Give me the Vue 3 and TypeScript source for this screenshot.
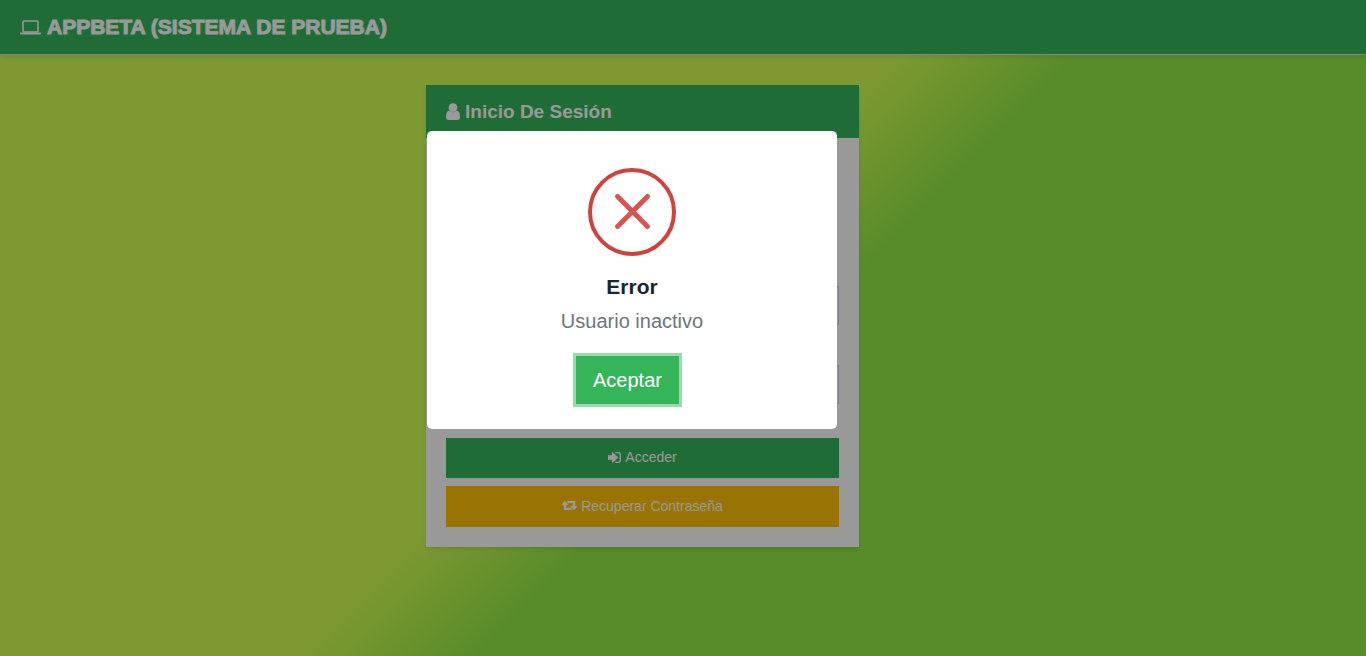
<script setup lang="ts">
import { ref } from 'vue'

const user = ref('')
const password = ref('')
const open = ref(true)
</script>

<template>
  <div class="page">
    <header class="topbar">
      <svg class="laptop" viewBox="0 0 21 15" aria-hidden="true">
        <rect x="3" y="1" width="15" height="11" rx="1" fill="none" stroke="currentColor" stroke-width="1.5" />
        <path d="M0 12.6H21V13.2Q21 14.6 19.5 14.6H1.5Q0 14.6 0 13.2Z" fill="currentColor" />
      </svg>
      <h1>APPBETA (SISTEMA DE PRUEBA)</h1>
    </header>

    <main class="content">
      <form class="card" @submit.prevent="open = true">
        <div class="card-head">
          <svg class="person" viewBox="0 0 14 17" fill="currentColor" aria-hidden="true">
            <circle cx="7" cy="4.6" r="4.4" />
            <path d="M3.2 7.6Q7 11 10.8 7.6Q14 8.2 14 14Q14 17 11.4 17H2.6Q0 17 0 14Q0 8.2 3.2 7.6Z" />
          </svg>
          <h2>Inicio De Sesión</h2>
        </div>
        <div class="card-body">
          <input v-model="user" class="field" type="text" aria-label="Usuario" />
          <input v-model="password" class="field" type="password" aria-label="Contraseña" />
          <div class="actions">
            <button class="btn green" type="submit">
              <svg class="enter" viewBox="192 256 1472 1280" fill="currentColor" aria-hidden="true">
                <path stroke="currentColor" stroke-width="40" d="M1312 896q0 26-19 45l-544 544q-19 19-45 19t-45-19-19-45v-288h-448q-26 0-45-19t-19-45v-384q0-26 19-45t45-19h448v-288q0-26 19-45t45-19 45 19l544 544q19 19 19 45zm352-352v704q0 119-84.5 203.5t-203.5 84.5h-320q-13 0-22.5-9.5t-9.5-22.5q0-4-1-20t-.5-26.5 3-23.5 10-19.5 20.5-6.5h320q66 0 113-47t47-113v-704q0-66-47-113t-113-47h-312l-11.5-1-11.5-3-8-5.5-7-9-2-13.5q0-4-1-20t-.5-26.5 3-23.5 10-19.5 20.5-6.5h320q119 0 203.5 84.5t84.5 203.5z" />
              </svg>
              <span>Acceder</span>
            </button>
            <button class="btn amber" type="button">
              <svg class="cycle" viewBox="0 384 1920 1152" fill="currentColor" aria-hidden="true">
                <path stroke="currentColor" stroke-width="50" d="M1280 1504q0 13-9.5 22.5t-22.5 9.5h-960q-8 0-13.5-2t-9-7-5.5-8-3-11.5-1-11.5v-600h-192q-26 0-45-19t-19-45q0-24 15-41l320-384q19-22 49-22t49 22l320 384q15 17 15 41 0 26-19 45t-45 19h-192v384h576q16 0 25 11l160 192q7 10 7 21zm640-416q0 24-15 41l-320 384q-20 23-49 23t-49-23l-320-384q-15-17-15-41 0-26 19-45t45-19h192v-384h-576q-16 0-25-12l-160-192q-7-9-7-20 0-13 9.5-22.5t22.5-9.5h960q8 0 13.5 2t9 7 5.5 8 3 11.5 1 11.5v600h192q26 0 45 19t19 45z" />
              </svg>
              <span>Recuperar Contraseña</span>
            </button>
          </div>
        </div>
      </form>
    </main>

    <div v-if="open" class="overlay">
      <section class="dialog" role="alertdialog" aria-labelledby="dialog-title" aria-describedby="dialog-text">
        <svg class="failure" viewBox="0 0 88 88" fill="none" aria-hidden="true">
          <circle cx="44" cy="44" r="42" stroke="#d0423c" stroke-width="4" />
          <path d="M29.5 28.5L59.5 58.5M59.5 28.5L29.5 58.5" stroke="#d9534f" stroke-width="5" stroke-linecap="round" />
        </svg>
        <h2 id="dialog-title">Error</h2>
        <p id="dialog-text">Usuario inactivo</p>
        <button class="accept" type="button" @click="open = false">Aceptar</button>
      </section>
    </div>
  </div>
</template>

<style>
body {
  margin: 0;
}
</style>

<style scoped>
* {
  box-sizing: border-box;
}

.page {
  min-height: 100vh;
  font-family: "Liberation Sans", Arial, sans-serif;
  background: linear-gradient(135deg, #d4ff54 47%, #92ea44 56%);
}

h1,
h2,
p {
  margin: 0;
}

svg {
  flex: none;
}

.topbar {
  display: flex;
  align-items: center;
  gap: 6px;
  height: 55px;
  padding: 0 20px;
  color: #fff;
  background: #35b55a;
  border-bottom: 1px solid #dee2e6;
  box-shadow: 0 2px 4px rgba(0, 0, 0, 0.1);
}

.topbar h1 {
  font-size: 21px;
  line-height: 24px;
  font-weight: 900;
  -webkit-text-stroke: 1px currentColor;
}

.laptop {
  width: 21px;
  height: 15px;
}

.content {
  display: grid;
  grid-template-columns: 426fr 433fr 507fr;
  padding: 30px 0;
}

.card {
  grid-column: 2;
  background: #fff;
  box-shadow: 0 2px 4px rgba(0, 0, 0, 0.1);
}

.card-head {
  display: flex;
  align-items: center;
  gap: 5px;
  height: 53px;
  padding: 0 20px;
  color: #fff;
  background: #35b55a;
}

.card-head h2 {
  font-size: 19px;
  line-height: 24px;
}

.person {
  width: 14px;
  height: 17px;
}

.card-body {
  display: flex;
  flex-direction: column;
  gap: 40px;
  padding: 148px 20px 20px;
}

.field {
  width: 100%;
  height: 39px;
  padding: 6px 12px;
  border: 1px solid #ced4da;
  border-radius: 0;
  background: #fff;
}

.actions {
  display: flex;
  flex-direction: column;
  gap: 8px;
  margin-top: -6px;
}

.btn {
  display: flex;
  align-items: center;
  justify-content: center;
  gap: 4px;
  padding: 9px 12px 11px;
  border: 0;
  color: #fff;
  font-family: inherit;
  font-size: 14px;
  line-height: 20px;
}

.green {
  background: #35b55a;
}

.amber {
  height: 41px;
  background: #ffc107;
}

.enter {
  width: 13px;
  height: 11px;
}

.cycle {
  width: 15px;
  height: 9px;
}

.overlay {
  position: fixed;
  inset: 0;
  display: flex;
  align-items: center;
  justify-content: center;
  padding: 0 102px 96px 0;
  background: rgba(0, 0, 0, 0.4);
}

.dialog {
  display: flex;
  flex-direction: column;
  align-items: center;
  width: 410px;
  padding: 37px 20px 22px;
  border-radius: 5px;
  background: #fff;
}

.failure {
  width: 88px;
  height: 88px;
}

.dialog h2 {
  margin-top: 18px;
  color: #212529;
  font-size: 21px;
  line-height: 26px;
}

.dialog p {
  margin-top: 8px;
  color: #6c757d;
  font-size: 20px;
  line-height: 26px;
}

.accept {
  height: 54px;
  margin: 19px 9px 0 0;
  padding: 0 17px;
  border: 3px solid #9bdaad;
  color: #fff;
  background: #35b55a;
  font-family: inherit;
  font-size: 20px;
  line-height: 26px;
}
</style>
